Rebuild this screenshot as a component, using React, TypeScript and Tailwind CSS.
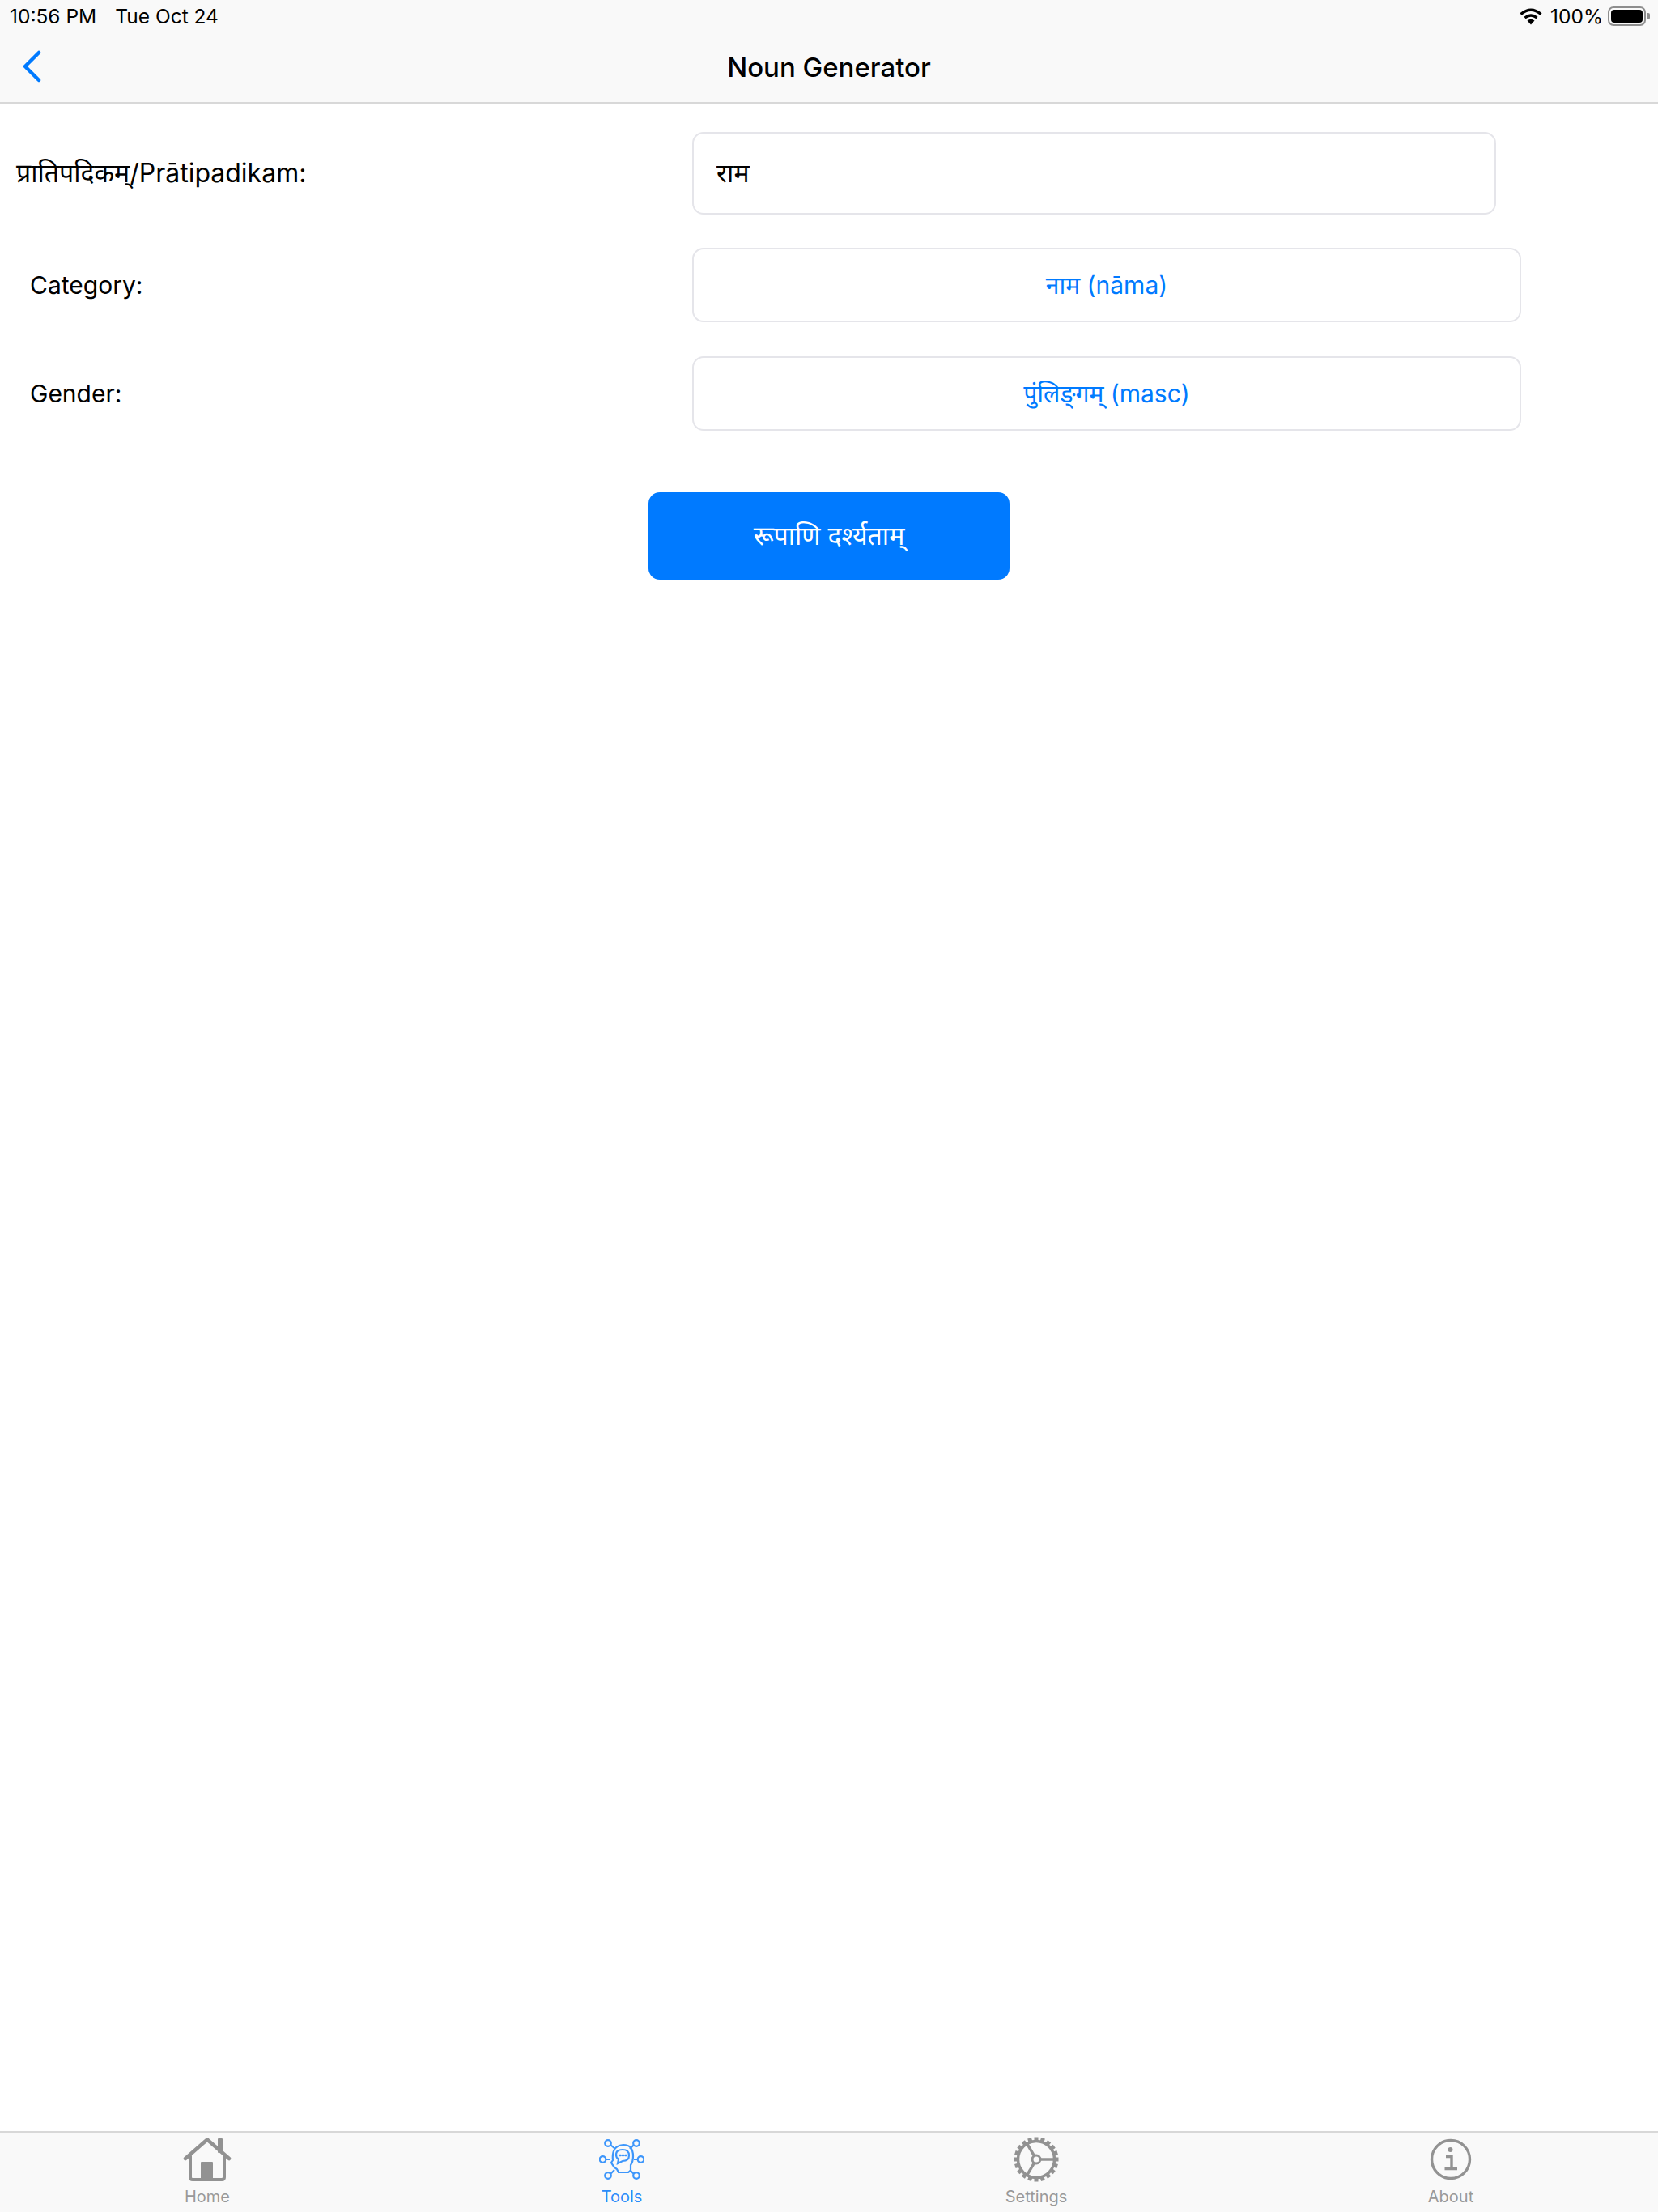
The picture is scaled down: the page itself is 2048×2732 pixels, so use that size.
const sans = "font-['Inter','Noto_Sans','Noto_Sans_Devanagari','Liberation_Sans',sans-serif]";

function HomeIcon() {
  return (
    <svg width="60" height="56" viewBox="0 0 60 56" fill="none" className="text-[#929292]">
      <path d="M3 27 L30 3.5 L57 27" stroke="currentColor" strokeWidth="4.5" strokeLinecap="round" strokeLinejoin="round" />
      <path d="M9 24 V50 Q9 53 12 53 H48 Q51 53 51 50 V24" stroke="currentColor" strokeWidth="4" strokeLinecap="round" />
      <rect x="22" y="31" width="15" height="21" rx="1" fill="currentColor" />
      <rect x="43" y="2" width="6" height="18" rx="1" fill="currentColor" />
    </svg>
  );
}

function ToolsIcon() {
  return (
    <svg width="56" height="52" viewBox="0 0 56 52" fill="none" stroke="#3d96fb" strokeWidth="2.2">
      <circle cx="11" cy="6" r="3.8" />
      <circle cx="46" cy="6" r="3.8" />
      <circle cx="4.5" cy="26" r="3.8" />
      <circle cx="51.5" cy="26" r="3.8" />
      <circle cx="11" cy="46" r="3.8" />
      <circle cx="46" cy="46" r="3.8" />
      <path d="M14 8 L20 13 M43 8 L38 13 M8 26 H14 M48 26 H43 M14 44 L19 39 M43 44 L38 39" />
      <path d="M19 36 Q16 32 15 30 L17 27 Q15 9 30 8 Q42 8 42 22 Q42 29 39 33 V40 L36 42 H24 L22 38 Z" />
      <path d="M21 20 Q21 14 29 14 Q37 14 37 21 Q37 28 29 28 L23 31 L24 26 Q21 24 21 20 Z" />
      <path d="M25.5 21 H26.5 M29 21 H30 M32.5 21 H33.5" strokeWidth="2.6" strokeLinecap="round" />
    </svg>
  );
}

function SettingsIcon() {
  const teeth = Array.from({ length: 20 }, (_, i) => i * 18);
  return (
    <svg width="58" height="58" viewBox="0 0 58 58" fill="none" stroke="#929292">
      {teeth.map((a) => (
        <rect key={a} x="26.5" y="1.5" width="5" height="6" fill="#929292" stroke="none" transform={`rotate(${a} 29 29)`} />
      ))}
      <circle cx="29" cy="29" r="22.5" strokeWidth="3.5" />
      <circle cx="29" cy="29" r="5" strokeWidth="3" />
      <path d="M34 29 H52 M26.5 24.7 L17 8.5 M26.5 33.3 L17 49.5" strokeWidth="3.5" />
    </svg>
  );
}

function AboutIcon() {
  return (
    <svg width="52" height="52" viewBox="0 0 52 52" fill="none" stroke="#929292">
      <circle cx="26" cy="26" r="23.5" strokeWidth="3.4" />
      <circle cx="25.5" cy="14" r="3" fill="#929292" stroke="none" />
      <path d="M20 22.5 H27 V37 M18.5 37.5 H34" strokeWidth="3.4" />
    </svg>
  );
}

const tabs = [
  { label: "Home", icon: HomeIcon, active: false },
  { label: "Tools", icon: ToolsIcon, active: true },
  { label: "Settings", icon: SettingsIcon, active: false },
  { label: "About", icon: AboutIcon, active: false },
];

function SelectRow({ label, value, className }: { label: string; value: string; className: string }) {
  return (
    <div className={`flex items-center ${className}`}>
      <div className="w-[855px] pl-[37px] text-[30px] text-black">{label}</div>
      <button className="h-[92px] w-[1024px] rounded-[14px] border-2 border-[#e5e5ea] bg-white text-[30px] text-[#007aff]">
        {value}
      </button>
    </div>
  );
}

export default function App() {
  return (
    <div className={`flex h-[2732px] w-[2048px] flex-col bg-white ${sans}`}>
      {/* Status + nav */}
      <header className="h-[128px] border-b-2 border-[#d8d8d8] bg-[#f9f9f9]">
        <div className="flex h-[40px] items-center justify-between pl-[12px] pr-[10px] text-[24.5px] text-black">
          <div className="flex gap-[23px]">
            <span>10:56 PM</span>
            <span>Tue Oct 24</span>
          </div>
          <div className="flex items-center">
            <svg width="28" height="21" viewBox="0 0 28 21" fill="none" stroke="black" strokeWidth="3.4">
              <path d="M1.5 7.5 Q14 -3 26.5 7.5" />
              <path d="M6.5 12 Q14 6 21.5 12" />
              <path d="M14 20.5 L9.5 15.5 Q14 12 18.500 15.500 Z" fill="black" stroke="none" />
            </svg>
            <span className="ml-[10px]">100%</span>
            <div className="ml-[6px] h-[24px] w-[47px] rounded-[7px] border-2 border-[#8e8e8e] p-[2px]">
              <div className="h-full w-full rounded-[4px] bg-black" />
            </div>
            <div className="ml-[2px] h-[8px] w-[3px] rounded-r-[2px] bg-[#8e8e8e]" />
          </div>
        </div>
        <div className="relative flex h-[86px] items-center justify-center pt-[2px]">
          <svg
            width="26"
            height="40"
            viewBox="0 0 26 40"
            fill="none"
            stroke="#007aff"
            strokeWidth="4.5"
            strokeLinecap="round"
            strokeLinejoin="round"
            className="absolute left-[26px] top-[22px]"
          >
            <path d="M22 3 L5 20 L22 37" />
          </svg>
          <h1 className="text-[33px] font-medium text-black">Noun Generator</h1>
        </div>
      </header>

      {/* Form */}
      <main className="flex-1 pt-[35px]">
        <div className="flex items-center">
          <div className="w-[855px] pl-[20px] text-[32px] text-black">प्रातिपदिकम्/Prātipadikam:</div>
          <div className="flex h-[102px] w-[993px] items-center rounded-[14px] border-2 border-[#e5e5ea] bg-white pl-[28px] text-[32px] text-black">
            राम
          </div>
        </div>
        <SelectRow label="Category:" value="नाम (nāma)" className="mt-[41px]" />
        <SelectRow label="Gender:" value="पुंलिङ्‌गम् (masc)" className="mt-[42px]" />
        <div className="mt-[76px] flex justify-center">
          <button className="h-[108px] w-[446px] rounded-[14px] bg-[#007aff] text-[32px] text-white">
            रूपाणि दर्श्यताम्
          </button>
        </div>
      </main>

      {/* Tab bar */}
      <nav className="grid h-[100px] grid-cols-4 border-t-2 border-[#d8d8d8] bg-[#f9f9f9]">
        {tabs.map((tab) => {
          const Icon = tab.icon;
          return (
            <div key={tab.label} className="flex flex-col items-center">
              <div className="mb-[2px] flex h-[65px] items-center">
                <Icon />
              </div>
              <span className={`text-[20px] leading-[24px] ${tab.active ? "text-[#2b8cfa]" : "text-[#999999]"}`}>
                {tab.label}
              </span>
            </div>
          );
        })}
      </nav>
    </div>
  );
}
